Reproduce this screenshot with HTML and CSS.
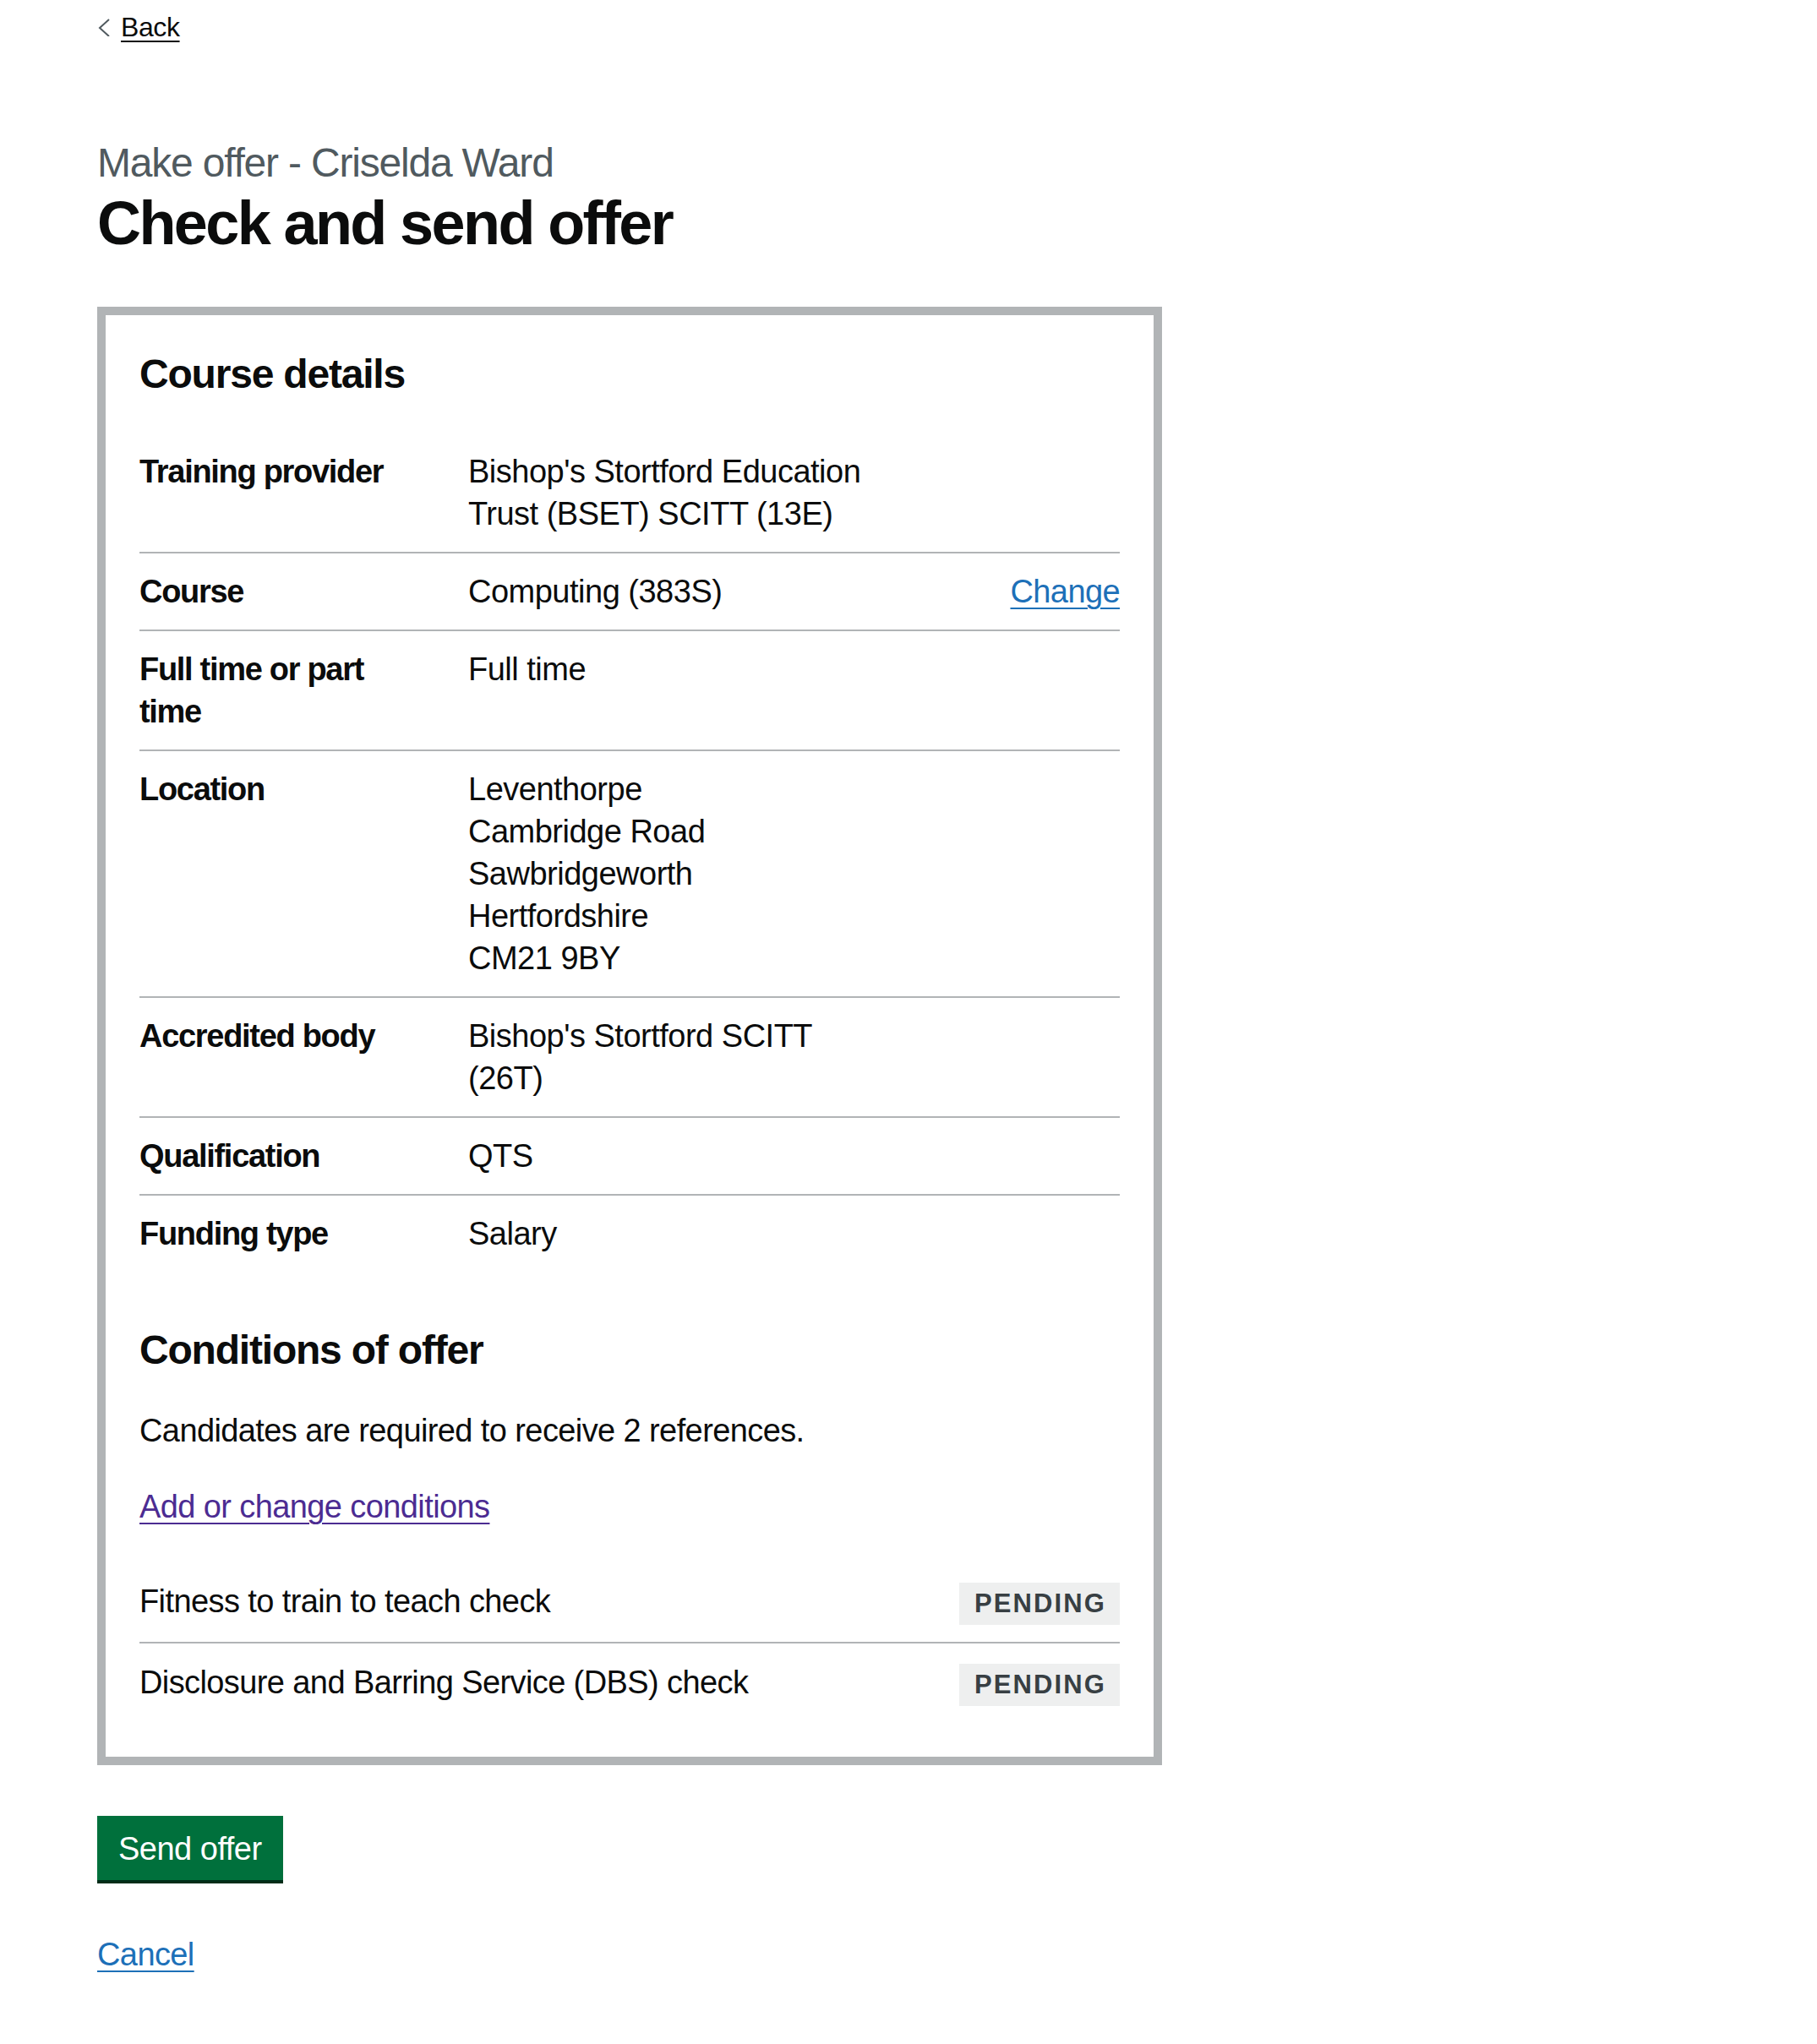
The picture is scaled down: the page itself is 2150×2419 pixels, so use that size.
FILE: index.html
```html
<!DOCTYPE html>
<html lang="en">
<head>
<meta charset="utf-8">
<title>Check and send offer</title>
<link rel="stylesheet" href="styles.css">
</head>
<body>
<div class="page">
  <a class="back-link" href="#">
    <svg class="back-chevron" width="16" height="22" viewBox="0 0 16 22" aria-hidden="true"><path d="M14 2 L3 12 L14 22" fill="none" stroke="#505a5f" stroke-width="2"/></svg>
    <span class="back-text">Back</span>
  </a>
  <main class="main">
    <span class="caption">Make offer - Criselda Ward</span>
    <h1 class="heading-l">Check and send offer</h1>

    <div class="panel">
      <h2 class="heading-m">Course details</h2>
      <dl class="summary">
        <div class="row">
          <dt class="key">Training provider</dt>
          <dd class="value">Bishop's Stortford Education Trust (BSET) SCITT (13E)</dd>
          <dd class="actions"></dd>
        </div>
        <div class="row">
          <dt class="key">Course</dt>
          <dd class="value">Computing (383S)</dd>
          <dd class="actions"><a class="link" href="#">Change</a></dd>
        </div>
        <div class="row">
          <dt class="key">Full time or part time</dt>
          <dd class="value">Full time</dd>
          <dd class="actions"></dd>
        </div>
        <div class="row">
          <dt class="key">Location</dt>
          <dd class="value">Leventhorpe<br>Cambridge Road<br>Sawbridgeworth<br>Hertfordshire<br>CM21 9BY</dd>
          <dd class="actions"></dd>
        </div>
        <div class="row">
          <dt class="key">Accredited body</dt>
          <dd class="value">Bishop's Stortford SCITT (26T)</dd>
          <dd class="actions"></dd>
        </div>
        <div class="row">
          <dt class="key">Qualification</dt>
          <dd class="value">QTS</dd>
          <dd class="actions"></dd>
        </div>
        <div class="row row-last">
          <dt class="key">Funding type</dt>
          <dd class="value">Salary</dd>
          <dd class="actions"></dd>
        </div>
      </dl>

      <h2 class="heading-m">Conditions of offer</h2>
      <p class="body">Candidates are required to receive 2 references.</p>
      <p class="body"><a class="link link-visited" href="#">Add or change conditions</a></p>

      <div class="checks">
        <div class="check-row">
          <span class="check-name">Fitness to train to teach check</span>
          <strong class="tag">PENDING</strong>
        </div>
        <div class="check-row check-row-last">
          <span class="check-name">Disclosure and Barring Service (DBS) check</span>
          <strong class="tag">PENDING</strong>
        </div>
      </div>
    </div>

    <button class="button" type="button">Send offer</button>
    <p class="body cancel"><a class="link" href="#">Cancel</a></p>
  </main>
</div>
</body>
</html>
```

FILE: styles.css
```css
* {
  box-sizing: border-box;
}

html, body {
  margin: 0;
  padding: 0;
  background: #ffffff;
}

body {
  font-family: "Liberation Sans", Arial, sans-serif;
  color: #0b0c0c;
}

.page {
  width: 1920px;
  margin: 0 auto;
}

/* Back link */
.back-link {
  display: flex;
  align-items: center;
  width: max-content;
  margin-top: 12px;
  font-size: 32px;
  line-height: 40px;
  letter-spacing: -0.4px;
  color: #0b0c0c;
  text-decoration: none;
}

.back-chevron {
  display: block;
  margin-right: 12px;
}

.back-text {
  text-decoration: underline;
  text-decoration-thickness: 2px;
  text-underline-offset: 5px;
}

/* Main */
.main {
  padding-top: 111px;
  padding-bottom: 80px;
}

.caption {
  display: block;
  font-size: 48px;
  line-height: 60px;
  color: #505a5f;
  letter-spacing: -1.2px;
  margin-bottom: 1px;
}

.heading-l {
  margin: 0 0 59px;
  font-size: 72px;
  line-height: 80px;
  font-weight: 700;
  letter-spacing: -2.6px;
}

.heading-m {
  margin: 0 0 40px;
  font-size: 48px;
  line-height: 60px;
  font-weight: 700;
  letter-spacing: -1.2px;
}

.panel {
  width: 1260px;
  border: 10px solid #b1b4b6;
  padding: 40px;
  margin-bottom: 60px;
}

/* Summary list */
.summary {
  margin: 0 0 63px;
  padding: 0;
}

.row {
  display: grid;
  grid-template-columns: 389px 490px 1fr;
  border-bottom: 2px solid #b1b4b6;
  font-size: 38px;
  line-height: 50px;
}

.row-last {
  border-bottom: 0;
}

.key,
.value,
.actions {
  margin: 0;
  padding: 20px 0;
}

.key {
  font-weight: 700;
  letter-spacing: -1.3px;
  padding-right: 60px;
}

.value {
  letter-spacing: -0.5px;
}

.actions {
  text-align: right;
  letter-spacing: -0.6px;
}

/* Body text and links */
.body {
  margin: 0 0 40px;
  font-size: 38px;
  line-height: 50px;
  letter-spacing: -0.6px;
}

.link {
  color: #1d70b8;
  text-decoration: underline;
  text-decoration-thickness: 2px;
  text-underline-offset: 6px;
}

.link-visited {
  color: #4c2c92;
}

/* Checks */
.checks {
  margin-top: 0;
}

.check-row {
  display: flex;
  justify-content: space-between;
  align-items: flex-start;
  padding: 22px 0 20px;
  border-bottom: 2px solid #b1b4b6;
  font-size: 38px;
  line-height: 50px;
  letter-spacing: -0.6px;
}

.check-row-last {
  border-bottom: 0;
  padding-top: 21px;
}

.tag {
  display: block;
  margin-top: 3px;
  height: 50px;
  padding: 0 16px 0 18px;
  background: #eeefef;
  color: #383f43;
  font-size: 31px;
  line-height: 50px;
  font-weight: 700;
  letter-spacing: 2.1px;
}

/* Button */
.button {
  display: block;
  margin: 0 0 63px;
  padding: 16px 21px 14px;
  border: 4px solid transparent;
  background: #00703c;
  box-shadow: 0 4px 0 #002d18;
  color: #ffffff;
  font-family: "Liberation Sans", Arial, sans-serif;
  font-size: 38px;
  line-height: 38px;
  letter-spacing: -0.5px;
  border-radius: 0;
  cursor: pointer;
}

.cancel {
  margin-bottom: 0;
}
```
